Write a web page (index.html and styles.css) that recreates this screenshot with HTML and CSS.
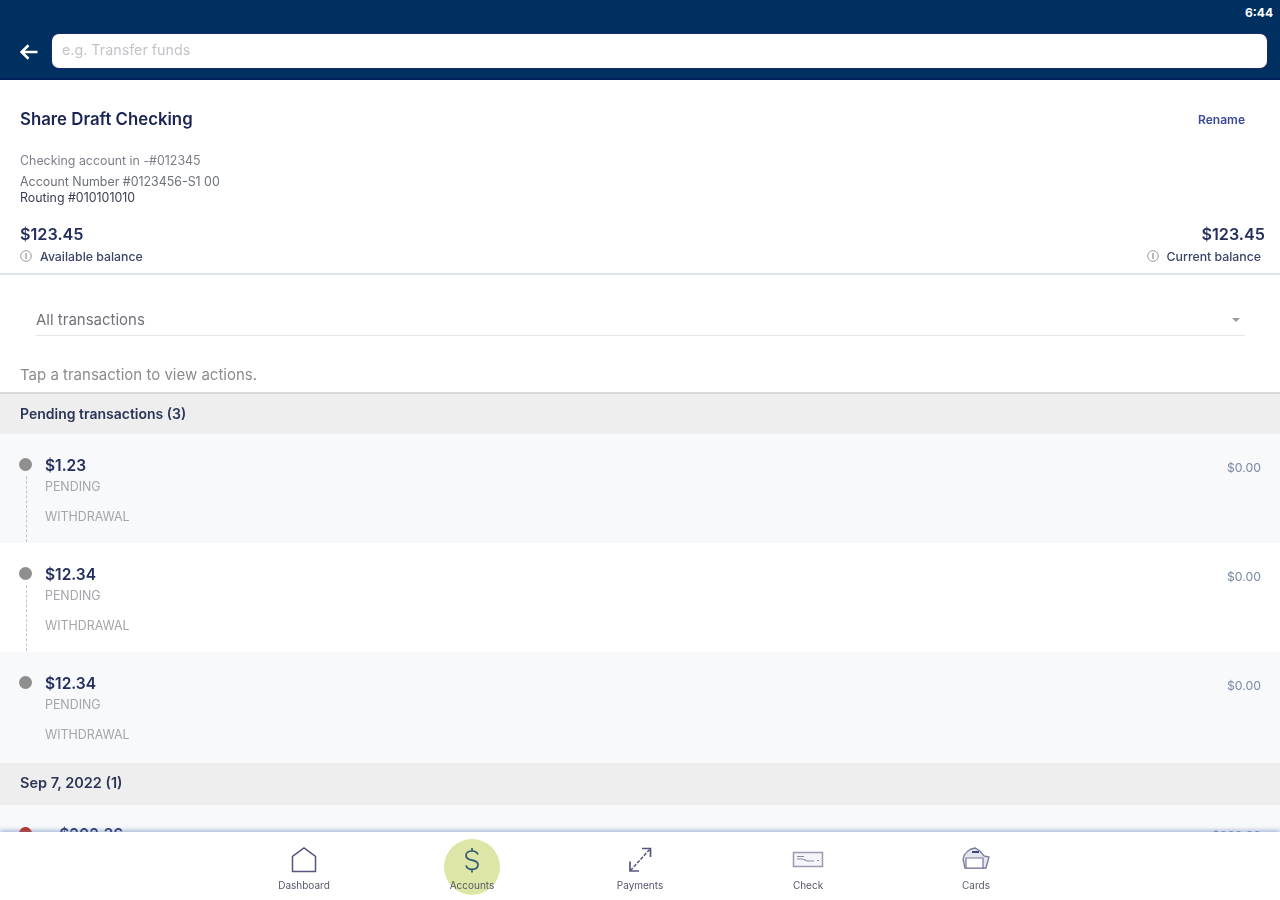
FILE: index.html
```html
<!DOCTYPE html>
<html lang="en">
<head>
<meta charset="utf-8">
<title>Share Draft Checking</title>
<link rel="stylesheet" href="styles.css">
</head>
<body>
<div class="app">
  <header class="topbar">
    <div class="status">6:44</div>
    <div class="searchrow">
      <svg class="back" width="20" height="18" viewBox="0 0 20 18" aria-hidden="true"><path d="M18.5 9H3M9.5 2.200 2.600 9l6.900 6.800" fill="none" stroke="#fff" stroke-width="2.600"/></svg>
      <div class="search">e.g. Transfer funds</div>
    </div>
  </header>

  <main class="content">
    <section class="account">
      <div class="titlerow">
        <h1 class="title">Share Draft Checking</h1>
        <a class="rename">Rename</a>
      </div>
      <p class="meta meta-first">Checking account in -#012345</p>
      <p class="meta meta-second">Account Number #0123456-S1 00</p>
      <p class="meta meta-third">Routing #010101010</p>
      <div class="balances">
        <div class="balance">
          <div class="amount">$123.45</div>
          <div class="ballabel"><svg class="info" width="12" height="12" viewBox="0 0 12 12" aria-hidden="true"><circle cx="6" cy="6" r="5.300" fill="none" stroke="#9a9a9a"/><path d="M6 3v6" stroke="#777"/></svg>Available balance</div>
        </div>
        <div class="balance balance-right">
          <div class="amount">$123.45</div>
          <div class="ballabel"><svg class="info" width="12" height="12" viewBox="0 0 12 12" aria-hidden="true"><circle cx="6" cy="6" r="5.300" fill="none" stroke="#9a9a9a"/><path d="M6 3v6" stroke="#777"/></svg>Current balance</div>
        </div>
      </div>
    </section>

    <section class="filter">
      <div class="select">
        <span>All transactions</span>
        <svg width="8" height="4" viewBox="0 0 10 5" aria-hidden="true"><path d="M0 0h10L5 5z" fill="#9a9a9a"/></svg>
      </div>
      <p class="hint">Tap a transaction to view actions.</p>
    </section>

    <h2 class="group">Pending transactions (3)</h2>

    <article class="tx tx-alt">
      <div class="timeline"><span class="dot"></span><span class="dash"></span></div>
      <div class="txbody"><div class="txamount">$1.23</div><div class="txline">PENDING</div><div class="txline txline-gap">WITHDRAWAL</div></div>
      <div class="txright">$0.00</div>
    </article>
    <article class="tx">
      <div class="timeline"><span class="dot"></span><span class="dash"></span></div>
      <div class="txbody"><div class="txamount">$12.34</div><div class="txline">PENDING</div><div class="txline txline-gap">WITHDRAWAL</div></div>
      <div class="txright">$0.00</div>
    </article>
    <article class="tx tx-alt tx-end">
      <div class="timeline"><span class="dot"></span></div>
      <div class="txbody"><div class="txamount">$12.34</div><div class="txline">PENDING</div><div class="txline txline-gap">WITHDRAWAL</div></div>
      <div class="txright">$0.00</div>
    </article>

    <h2 class="group group-date">Sep 7, 2022 (1)</h2>

    <article class="tx tx-alt tx-last">
      <div class="timeline"><span class="dot dot-red"></span></div>
      <div class="txbody txbody-debit"><div class="txamount">-$202.36</div></div>
      <div class="txright txright-debit">$202.36</div>
    </article>
  </main>

  <nav class="tabbar">
    <a class="tab">
      <svg class="tabicon" width="28" height="28" viewBox="0 0 28 28" aria-hidden="true"><path d="M2.500 25.500V10.500L14 2l11.500 8.500V25.500z" fill="none" stroke="#55557f" stroke-width="1.500"/></svg>
      <span>Dashboard</span>
    </a>
    <a class="tab tab-active">
      <span class="halo"></span>
      <svg class="tabicon" width="28" height="28" viewBox="0 0 28 28" aria-hidden="true"><path d="M20 8.500C19 6 17 5 14 5c-3.500 0-6 1.800-6 4.500S10.500 13.500 14 14.200s6 1.800 6 4.600-2.500 4.500-6 4.500c-3 0-5.200-1.200-6-3.800M14 2v3M14 23.500v3" fill="none" stroke="#2f5a72" stroke-width="1.700"/></svg>
      <span>Accounts</span>
    </a>
    <a class="tab">
      <svg class="tabicon" width="28" height="28" viewBox="0 0 28 28" aria-hidden="true"><path d="M16 2.500h8.500V11M4 15.500V25h9" fill="none" stroke="#55557f" stroke-width="1.700"/><path d="M4.500 24.500 24 3" fill="none" stroke="#55557f" stroke-width="1.500" stroke-dasharray="3.500 1.500"/></svg>
      <span>Payments</span>
    </a>
    <a class="tab">
      <svg class="tabicon" width="32" height="28" viewBox="0 0 32 28" aria-hidden="true"><path d="M1.500 6.500h29v14h-29z" fill="#f4f5f8" stroke="#9a9ab4" stroke-width="1.500"/><path d="M5 10.500h7M5 13h5c3 0 3 2 6 2h6M25 14.500h2" fill="none" stroke="#8a8aa8" stroke-width="1.200"/></svg>
      <span>Check</span>
    </a>
    <a class="tab">
      <svg class="tabicon" width="30" height="28" viewBox="0 0 30 28" aria-hidden="true"><path d="M2 13C3 7 8 3 14 2l5 3 4 5 5 1-3 11H4z" fill="#e4e5ee" stroke="#7a7a9c" stroke-width="1.300"/><path d="M5 12h17v10H5z" fill="#fff" stroke="#77779a" stroke-width="1.200"/><path d="M11 6h7" stroke="#44447a" stroke-width="2"/></svg>
      <span>Cards</span>
    </a>
  </nav>
</div>
</body>
</html>
```
FILE: styles.css
```css
* { box-sizing: border-box; }
html, body { margin: 0; padding: 0; background: #fff; }
body { font-family: Inter, "Liberation Sans", sans-serif; color: #1f2a52; }
p, h1, h2 { margin: 0; }

.app { width: 1280px; height: 900px; display: flex; flex-direction: column; overflow: hidden; filter: blur(0.45px); }

.topbar { height: 80px; flex: none; background: #003060; border-bottom: 2px solid #00205c; display: flex; flex-direction: column; }
.status { height: 34px; padding: 6px 7px 0 0; text-align: right; font-size: 12px; line-height: 14px; font-weight: 700; color: #fff; }
.searchrow { display: flex; align-items: center; padding: 0 13px 0 19px; }
.back { margin-right: 13px; margin-top: 2px; flex: none; }
.search { flex: 1; height: 34px; background: #fff; border-radius: 7px; padding-left: 10px; font-size: 14.300px; line-height: 31px; color: #c2c4c8; box-shadow: 0 0 0 1px #1c2a6a; }

.content { flex: 1; min-height: 0; overflow: hidden; }

.account { padding: 0 15px 0 20px; height: 195px; border-bottom: 2px solid #dfe3f1; display: flex; flex-direction: column; }
.titlerow { display: flex; justify-content: space-between; align-items: center; height: 24px; flex: none; margin-top: 27px; padding-right: 20px; }
.title { font-size: 16.800px; line-height: 24px; font-weight: 600; color: #1b2555; }
.rename { font-size: 12px; font-weight: 600; color: #3a4a9a; }
.meta { font-size: 12.400px; line-height: 16px; color: #7c7f88; }
.meta-first { margin-top: 22px; }
.meta-second { margin-top: 5px; color: #6c7078; }
.meta-third { color: #3c4050; }
.balances { display: flex; justify-content: space-between; margin-top: 18px; }
.balance { display: flex; flex-direction: column; }
.balance-right { align-items: flex-end; }
.amount { font-size: 16.200px; line-height: 20px; font-weight: 600; color: #25305c; }
.ballabel { display: flex; align-items: center; height: 16px; margin-top: 4px; padding-right: 4px; font-size: 12.300px; font-weight: 500; color: #3b4466; white-space: nowrap; }
.info { margin-right: 8px; }

.filter { padding: 0 0 7px 20px; border-bottom: 2px solid #d9d9d9; }
.select { display: flex; justify-content: space-between; align-items: center; width: 1209px; height: 36px; margin: 25px 0 0 16px; padding: 4px 5px 0 0; border-bottom: 1px solid #e6e6e6; font-size: 15px; color: #6f7278; }
.hint { margin-top: 29px; font-size: 15px; line-height: 20px; color: #8a8c90; }

.group { height: 40px; padding-left: 20px; background: #eeeeee; font-size: 14px; line-height: 39px; font-weight: 600; color: #2c3558; }
.group-date { height: 42px; line-height: 40px; font-size: 14.500px; }
.tx { display: flex; height: 109px; padding: 24px 19px 0 19px; background: #fff; }
.tx-alt { background: #f8f9fb; }
.tx-end { height: 111px; }
.tx-last { padding-top: 22px; }
.timeline { width: 13px; flex: none; display: flex; flex-direction: column; align-items: center; padding-bottom: 1px; }
.dot { width: 13px; height: 13px; border-radius: 50%; background: #8f8f8f; flex: none; }
.dot-red { background: #c8240e; }
.dash { flex: 1; margin-top: 5px; margin-left: 2px; border-left: 1px dashed #c0c4d6; }
.txbody { flex: 1; margin-left: 13px; margin-top: 1px; }
.txbody-debit { margin-left: 20px; }
.txamount { font-size: 15.500px; line-height: 14px; font-weight: 600; color: #232e5c; }
.txline { margin-top: 7px; font-size: 12.400px; line-height: 14px; color: #a4a6aa; }
.txline-gap { margin-top: 16px; }
.txright { margin-top: 3px; font-size: 12.300px; line-height: 14px; color: #7c8aa6; }
.txright-debit { margin-top: 2px; }

.tabbar { position: relative; z-index: 1; height: 68px; flex: none; background: #fff; display: flex; justify-content: center; box-shadow: 0 -2px 4px rgba(110, 140, 190, 0.55); }
.tab { position: relative; width: 168px; display: flex; flex-direction: column; align-items: center; padding-top: 14px; font-size: 10px; line-height: 12px; color: #55586a; }
.tabicon { position: relative; height: 28px; flex: none; margin-bottom: 5px; }
.tab span { position: relative; }
.tab .halo { position: absolute; left: 56px; top: 7px; width: 56px; height: 56px; border-radius: 50%; background: #dde6a6; }
```
